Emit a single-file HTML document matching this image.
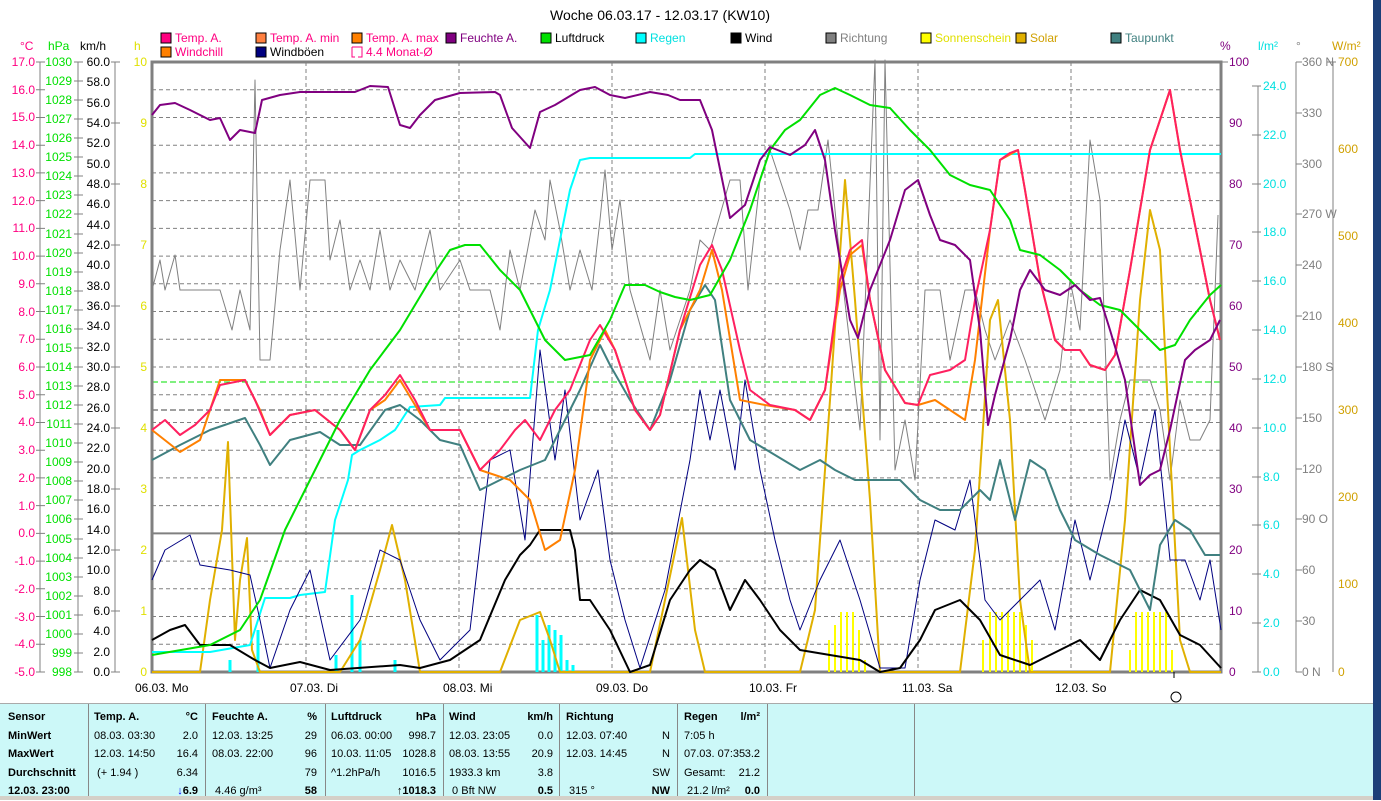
<!DOCTYPE html>
<html><head><meta charset="utf-8"><style>
body{margin:0;width:1381px;height:800px;overflow:hidden;background:#fff;font-family:"Liberation Sans",sans-serif}
svg{position:absolute;left:0;top:0}
text{font-family:"Liberation Sans",sans-serif;font-size:12px}
#tbl{position:absolute;left:0;top:703px;width:1373px;height:92px;background:#ccf8f8;border-top:1px solid #aaa}
.c{position:absolute;top:0;height:92px;border-left:1px solid #888}
.r{position:absolute;font-size:11px;line-height:18.6px;font-family:"Liberation Sans",sans-serif;white-space:nowrap}
.b{font-weight:bold}
</style></head><body>
<svg width="1381" height="800" viewBox="0 0 1381 800">
<text x="660" y="20" text-anchor="middle" style="font-size:14px">Woche 06.03.17 - 12.03.17 (KW10)</text>
<g style="font-size:12px">
<rect x="161" y="33" width="10" height="10" fill="#ff0080" stroke="#000"/><text x="175" y="42" fill="#ff0080">Temp. A.</text>
<rect x="256" y="33" width="10" height="10" fill="#ff8040" stroke="#000"/><text x="270" y="42" fill="#ff0080">Temp. A. min</text>
<rect x="352" y="33" width="10" height="10" fill="#ff8000" stroke="#000"/><text x="366" y="42" fill="#ff0080">Temp. A. max</text>
<rect x="446" y="33" width="10" height="10" fill="#800080" stroke="#000"/><text x="460" y="42" fill="#800080">Feuchte A.</text>
<rect x="541" y="33" width="10" height="10" fill="#00e000" stroke="#000"/><text x="555" y="42" fill="#000">Luftdruck</text>
<rect x="636" y="33" width="10" height="10" fill="#00ffff" stroke="#000"/><text x="650" y="42" fill="#00e0e0">Regen</text>
<rect x="731" y="33" width="10" height="10" fill="#000" stroke="#000"/><text x="745" y="42" fill="#000">Wind</text>
<rect x="826" y="33" width="10" height="10" fill="#808080" stroke="#000"/><text x="840" y="42" fill="#808080">Richtung</text>
<rect x="921" y="33" width="10" height="10" fill="#ffff00" stroke="#000"/><text x="935" y="42" fill="#e0e000">Sonnenschein</text>
<rect x="1016" y="33" width="10" height="10" fill="#e0b000" stroke="#000"/><text x="1030" y="42" fill="#d0a000">Solar</text>
<rect x="1111" y="33" width="10" height="10" fill="#408080" stroke="#000"/><text x="1125" y="42" fill="#408080">Taupunkt</text>
<rect x="161" y="47" width="10" height="10" fill="#ff8000" stroke="#000"/><text x="175" y="56" fill="#ff0080">Windchill</text>
<rect x="256" y="47" width="10" height="10" fill="#000080" stroke="#000"/><text x="270" y="56" fill="#000">Windböen</text>
<path d="M352 47h10v10h-4" fill="none" stroke="#ff0080"/><path d="M352 47v10h3" fill="none" stroke="#ff0080"/><text x="366" y="56" fill="#ff0080">4.4 Monat-Ø</text>
</g>
<text x="20" y="50" fill="#ff0080">°C</text><text x="48" y="50" fill="#00e000">hPa</text><text x="80" y="50" fill="#000">km/h</text><text x="134" y="50" fill="#e0e000">h</text>
<text x="1220" y="50" fill="#800080">%</text><text x="1258" y="50" fill="#00e0e0">l/m²</text><text x="1296" y="50" fill="#808080">°</text><text x="1332" y="50" fill="#d0a000">W/m²</text>
<g stroke="#808080" stroke-dasharray="4,3" stroke-width="1">
<path d="M152 89.7H1221M152 117.5H1221M152 145.2H1221M152 172.9H1221M152 200.6H1221M152 228.4H1221M152 256.1H1221M152 283.8H1221M152 311.5H1221M152 339.3H1221M152 367H1221M152 394.7H1221M152 422.5H1221M152 450.2H1221M152 477.9H1221M152 505.6H1221M152 561.1H1221M152 588.8H1221M152 616.5H1221M152 644.3H1221"/>
<path d="M306 62V672M459 62V672M612 62V672M765 62V672M918 62V672M1071 62V672"/>
</g>
<path d="M152 382H1221" stroke="#00e000" stroke-dasharray="6,3"/>
<path d="M152 410H1221" stroke="#404040" stroke-dasharray="6,3"/>
<path d="M152 533.4H1221" stroke="#808080" stroke-width="2"/>
<rect x="152" y="62" width="1069" height="610" fill="none" stroke="#808080" stroke-width="3"/>
<g stroke="#808080"><path d="M40 62V672M78 62V672M115 62V672"/>
<path d="M36 62h9M36 89.7h9M36 117.5h9M36 145.2h9M36 172.9h9M36 200.6h9M36 228.4h9M36 256.1h9M36 283.8h9M36 311.5h9M36 339.3h9M36 367h9M36 394.7h9M36 422.5h9M36 450.2h9M36 477.9h9M36 505.6h9M36 533.4h9M36 561.1h9M36 588.8h9M36 616.5h9M36 644.3h9M36 672h9"/>
<path d="M74 62h9M74 81h9M74 100h9M74 119h9M74 138h9M74 157h9M74 176h9M74 195h9M74 214h9M74 234h9M74 253h9M74 272h9M74 291h9M74 310h9M74 329h9M74 348h9M74 367h9M74 386h9M74 405h9M74 424h9M74 443h9M74 462h9M74 481h9M74 500h9M74 519h9M74 539h9M74 558h9M74 577h9M74 596h9M74 615h9M74 634h9M74 653h9M74 672h9"/>
<path d="M111 62h9M111 123h9M111 184h9M111 245h9M111 306h9M111 367h9M111 428h9M111 489h9M111 550h9M111 611h9M111 672h9"/>
<path d="M1221 62h7M1258 86V672M1252 86h9M1252 135h9M1252 184h9M1252 232h9M1252 281h9M1252 330h9M1252 379h9M1252 428h9M1252 477h9M1252 525h9M1252 574h9M1252 623h9M1252 672h9"/>
<path d="M1296 62V672M1296 62h6M1296 113h6M1296 164h6M1296 214h6M1296 265h6M1296 316h6M1296 367h6M1296 418h6M1296 469h6M1296 519h6M1296 570h6M1296 621h6M1296 672h6"/>
<path d="M1333 62V672M1327 62h9"/></g>
<g fill="#ff0080" text-anchor="end">
<text x="35" y="66">17.0</text><text x="35" y="94">16.0</text><text x="35" y="121">15.0</text><text x="35" y="149">14.0</text><text x="35" y="177">13.0</text><text x="35" y="205">12.0</text><text x="35" y="232">11.0</text><text x="35" y="260">10.0</text><text x="35" y="288">9.0</text><text x="35" y="316">8.0</text><text x="35" y="343">7.0</text><text x="35" y="371">6.0</text><text x="35" y="399">5.0</text><text x="35" y="426">4.0</text><text x="35" y="454">3.0</text><text x="35" y="482">2.0</text><text x="35" y="510">1.0</text><text x="35" y="537">0.0</text><text x="35" y="565">-1.0</text><text x="35" y="593">-2.0</text><text x="35" y="621">-3.0</text><text x="35" y="648">-4.0</text><text x="35" y="676">-5.0</text></g>
<g fill="#00e000" text-anchor="end">
<text x="72" y="66">1030</text><text x="72" y="85">1029</text><text x="72" y="104">1028</text><text x="72" y="123">1027</text><text x="72" y="142">1026</text><text x="72" y="161">1025</text><text x="72" y="180">1024</text><text x="72" y="199">1023</text><text x="72" y="218">1022</text><text x="72" y="238">1021</text><text x="72" y="257">1020</text><text x="72" y="276">1019</text><text x="72" y="295">1018</text><text x="72" y="314">1017</text><text x="72" y="333">1016</text><text x="72" y="352">1015</text><text x="72" y="371">1014</text><text x="72" y="390">1013</text><text x="72" y="409">1012</text><text x="72" y="428">1011</text><text x="72" y="447">1010</text><text x="72" y="466">1009</text><text x="72" y="485">1008</text><text x="72" y="504">1007</text><text x="72" y="523">1006</text><text x="72" y="543">1005</text><text x="72" y="562">1004</text><text x="72" y="581">1003</text><text x="72" y="600">1002</text><text x="72" y="619">1001</text><text x="72" y="638">1000</text><text x="72" y="657">999</text><text x="72" y="676">998</text></g>
<g fill="#000" text-anchor="end">
<text x="110" y="66">60.0</text><text x="110" y="86">58.0</text><text x="110" y="107">56.0</text><text x="110" y="127">54.0</text><text x="110" y="147">52.0</text><text x="110" y="168">50.0</text><text x="110" y="188">48.0</text><text x="110" y="208">46.0</text><text x="110" y="229">44.0</text><text x="110" y="249">42.0</text><text x="110" y="269">40.0</text><text x="110" y="290">38.0</text><text x="110" y="310">36.0</text><text x="110" y="330">34.0</text><text x="110" y="351">32.0</text><text x="110" y="371">30.0</text><text x="110" y="391">28.0</text><text x="110" y="412">26.0</text><text x="110" y="432">24.0</text><text x="110" y="452">22.0</text><text x="110" y="473">20.0</text><text x="110" y="493">18.0</text><text x="110" y="513">16.0</text><text x="110" y="534">14.0</text><text x="110" y="554">12.0</text><text x="110" y="574">10.0</text><text x="110" y="595">8.0</text><text x="110" y="615">6.0</text><text x="110" y="635">4.0</text><text x="110" y="656">2.0</text><text x="110" y="676">0.0</text></g>
<g fill="#e0e000" text-anchor="end" style="font-size:11px">
<text x="147" y="66">10</text><text x="147" y="127">9</text><text x="147" y="188">8</text><text x="147" y="249">7</text><text x="147" y="310">6</text><text x="147" y="371">5</text><text x="147" y="432">4</text><text x="147" y="493">3</text><text x="147" y="554">2</text><text x="147" y="615">1</text><text x="147" y="676">0</text></g>
<g fill="#800080">
<text x="1229" y="66">100</text><text x="1229" y="127">90</text><text x="1229" y="188">80</text><text x="1229" y="249">70</text><text x="1229" y="310">60</text><text x="1229" y="371">50</text><text x="1229" y="432">40</text><text x="1229" y="493">30</text><text x="1229" y="554">20</text><text x="1229" y="615">10</text><text x="1229" y="676">0</text></g>
<g fill="#00e0e0">
<text x="1263" y="90">24.0</text><text x="1263" y="139">22.0</text><text x="1263" y="188">20.0</text><text x="1263" y="236">18.0</text><text x="1263" y="285">16.0</text><text x="1263" y="334">14.0</text><text x="1263" y="383">12.0</text><text x="1263" y="432">10.0</text><text x="1263" y="481">8.0</text><text x="1263" y="529">6.0</text><text x="1263" y="578">4.0</text><text x="1263" y="627">2.0</text><text x="1263" y="676">0.0</text></g>
<g fill="#808080">
<text x="1302" y="66">360 N</text><text x="1302" y="117">330</text><text x="1302" y="168">300</text><text x="1302" y="218">270 W</text><text x="1302" y="269">240</text><text x="1302" y="320">210</text><text x="1302" y="371">180 S</text><text x="1302" y="422">150</text><text x="1302" y="473">120</text><text x="1302" y="523">90 O</text><text x="1302" y="574">60</text><text x="1302" y="625">30</text><text x="1302" y="676">0 N</text></g>
<g fill="#d0a000">
<text x="1338" y="66">700</text><text x="1338" y="153">600</text><text x="1338" y="240">500</text><text x="1338" y="327">400</text><text x="1338" y="414">300</text><text x="1338" y="501">200</text><text x="1338" y="588">100</text><text x="1338" y="676">0</text></g>
<g stroke="#ffff00" stroke-width="2">
<path d="M829 672V640M835 672V625M841 672V612M847 672V612M853 672V612M859 672V630M865 672V660M983 672V640M990 672V612M996 672V612M1002 672V612M1008 672V612M1014 672V612M1020 672V612M1026 672V625M1032 672V640M1130 672V650M1136 672V612M1142 672V612M1148 672V612M1154 672V612M1160 672V612M1166 672V612M1172 672V650M543 672V660M549 672V650M555 672V640M561 672V650M567 672V660"/>
</g>
<g stroke="#00ffff" stroke-width="3">
<path d="M230 672V660M258 672V630M336 672V655M352 672V595M360 672V640M395 672V660M537 672V615M543 672V640M549 672V625M555 672V630M561 672V635M567 672V660M573 672V665"/>
</g>
<g fill="none" stroke-linejoin="round">
<polyline stroke="#808080" stroke-width="1" points="152,290 160,260 165,290 175,255 180,290 220,290 232,330 240,290 250,330 255,80 260,360 270,360 280,250 290,180 300,290 310,180 325,180 330,260 340,220 350,290 360,260 370,290 380,230 390,290 400,260 415,290 430,230 440,290 460,260 470,290 490,290 500,330 510,250 520,290 535,210 545,240 550,180 560,230 570,290 580,250 592,290 600,220 605,170 612,250 620,200 630,290 650,360 660,290 670,350 690,290 700,240 710,250 730,180 740,180 748,290 760,180 770,150 780,180 790,210 800,250 808,210 818,210 828,140 840,260 860,430 875,60 880,440 885,60 895,470 905,420 915,480 925,290 940,290 950,360 965,290 975,290 985,330 995,360 1010,320 1025,360 1045,420 1060,370 1070,280 1080,330 1090,140 1100,200 1110,480 1120,420 1130,380 1150,380 1160,410 1170,480 1180,400 1190,440 1200,440 1210,420 1218,215"/>
<polyline stroke="#e0b000" stroke-width="2" points="152,672 200,672 210,600 222,530 228,442 235,640 240,580 247,538 252,650 260,672 340,672 360,640 380,570 392,525 405,580 420,672 500,672 520,620 540,612 550,640 560,672 650,672 665,600 682,518 695,630 705,672 800,672 815,610 830,400 845,180 855,300 870,500 880,672 960,672 975,550 990,320 998,300 1010,420 1020,600 1030,672 1110,672 1125,520 1140,300 1150,210 1160,250 1170,450 1180,640 1190,672 1221,672"/>
<polyline stroke="#00ffff" stroke-width="2" points="152,652 210,652 250,645 265,598 290,598 300,595 325,592 335,520 348,480 352,455 360,450 380,440 395,430 410,407 440,405 445,398 530,398 538,330 550,290 570,190 580,160 590,158 690,158 695,154 1221,154"/>
<polyline stroke="#000080" stroke-width="1" points="152,580 165,550 190,535 200,565 230,570 250,575 260,620 270,668 290,610 310,570 330,660 360,620 380,550 400,560 420,620 440,660 470,630 490,460 510,450 525,540 540,350 555,460 565,390 580,520 598,470 610,560 625,620 640,668 665,590 690,460 700,390 710,440 720,390 735,470 745,380 760,470 775,540 790,600 800,630 820,580 840,540 860,600 880,668 905,668 920,580 935,520 955,530 970,480 985,600 1000,620 1020,600 1040,580 1055,630 1075,520 1090,580 1110,500 1125,420 1140,480 1155,410 1170,560 1185,560 1200,600 1210,560 1221,630"/>
<polyline stroke="#000" stroke-width="2" points="152,640 170,630 185,625 200,645 230,645 255,660 270,668 300,662 330,670 400,665 420,668 450,660 480,640 505,580 520,555 530,545 540,530 550,530 560,530 570,530 575,550 580,600 590,600 610,630 630,672 650,665 670,600 690,570 700,560 715,570 730,610 745,580 760,600 780,630 800,650 830,655 860,660 880,672 900,668 920,640 935,610 960,600 980,620 1000,655 1030,665 1060,650 1080,640 1100,660 1120,620 1140,590 1160,600 1180,635 1200,645 1221,668"/>
<polyline stroke="#408080" stroke-width="2" points="152,460 180,445 210,430 245,418 260,445 270,465 290,440 320,432 340,445 360,445 385,410 400,405 420,420 440,440 460,445 480,490 500,480 520,470 545,460 565,420 580,390 600,345 610,365 630,400 650,430 670,380 690,310 705,285 715,300 730,400 750,440 775,455 800,470 820,460 835,470 855,480 880,480 900,480 920,500 940,510 960,510 980,490 990,500 1000,460 1015,520 1030,460 1045,470 1060,510 1075,540 1100,555 1130,570 1150,610 1160,545 1175,520 1190,530 1205,555 1220,555"/>
<polyline stroke="#ff8000" stroke-width="2" points="152,430 180,452 200,440 220,380 245,380 260,410 270,435 290,415 315,410 340,430 355,450 370,410 385,400 400,380 415,405 430,430 460,430 480,470 510,480 530,500 545,550 560,540 575,470 590,360 605,330 615,350 635,410 650,430 660,415 680,330 700,290 712,250 722,290 740,400 765,405 795,410 810,420 825,390 840,290 850,255 862,245 870,300 885,370 905,403 918,405 935,400 950,410 965,420 975,360 990,230 1000,160 1018,150 1025,190 1040,280 1055,340 1065,350 1080,350 1090,365 1105,370 1115,355 1130,270 1150,150 1170,90 1180,150 1200,250 1210,300 1220,340"/>
<polyline stroke="#ff2060" stroke-width="2" points="152,430 165,420 180,435 195,425 210,410 220,385 245,380 255,400 270,435 290,415 315,410 340,430 355,450 370,410 385,395 400,375 415,400 430,430 460,430 480,470 500,450 515,430 525,420 540,440 555,410 570,390 590,340 600,325 615,350 635,410 650,430 660,415 680,330 700,265 712,245 722,270 740,350 750,390 770,405 795,410 810,420 825,390 840,280 850,250 862,240 870,300 885,370 905,403 918,405 930,375 950,370 965,360 975,300 990,230 1000,160 1010,153 1018,150 1025,190 1040,280 1055,340 1065,350 1080,350 1090,365 1105,370 1115,355 1130,270 1150,150 1170,90 1180,150 1200,250 1210,300 1220,340"/>
<polyline stroke="#00e000" stroke-width="2" points="152,655 210,645 240,630 260,600 285,530 310,480 340,420 370,370 400,330 430,280 450,250 465,245 480,245 500,270 520,290 545,340 565,360 590,355 610,320 625,285 645,285 660,292 675,297 690,300 710,295 730,260 750,210 770,150 785,130 800,120 820,95 835,88 850,95 870,105 890,108 910,130 930,150 950,175 970,185 990,190 1010,220 1020,250 1040,255 1060,270 1080,290 1100,305 1120,310 1140,330 1160,350 1175,345 1190,320 1210,295 1221,285"/>
<polyline stroke="#800080" stroke-width="2" points="152,115 160,105 175,103 190,110 210,120 220,118 230,140 240,130 255,133 262,100 280,95 300,92 355,92 370,86 388,87 400,125 410,128 420,115 435,100 460,93 495,92 500,95 512,128 530,148 540,112 555,105 580,90 595,87 610,95 625,98 650,92 668,95 680,100 700,100 712,130 730,218 745,205 760,160 770,147 790,155 805,145 815,130 825,160 835,230 850,320 858,338 870,290 890,240 905,190 918,180 930,215 940,240 955,245 970,260 980,330 988,425 995,395 1010,340 1020,290 1030,270 1045,290 1060,295 1075,285 1090,300 1100,298 1110,330 1125,380 1140,485 1150,475 1160,470 1170,430 1185,360 1195,350 1210,340 1220,320"/>
</g>
<path d="M1174 672v6" stroke="#000"/>
<g style="font-size:11px"><text x="135" y="692">06.03.  Mo</text><text x="290" y="692">07.03.  Di</text><text x="443" y="692">08.03.  Mi</text><text x="596" y="692">09.03.  Do</text><text x="749" y="692">10.03.  Fr</text><text x="902" y="692">11.03.  Sa</text><text x="1055" y="692">12.03.  So</text></g>
<circle cx="1176" cy="697" r="5" fill="none" stroke="#000"/>
<rect x="1373" y="0" width="8" height="800" fill="#1c3f78"/>
<rect x="0" y="795" width="1373" height="5" fill="#d4d0c8"/>
</svg>
<div id="tbl">
<div class="c" style="left:88px"></div><div class="c" style="left:205px"></div><div class="c" style="left:325px"></div><div class="c" style="left:443px"></div><div class="c" style="left:559px"></div><div class="c" style="left:677px"></div><div class="c" style="left:767px"></div><div class="c" style="left:914px"></div>
<div class="r b" style="left:8px;top:4px">Sensor<br>MinWert<br>MaxWert<br>Durchschnitt<br>12.03. 23:00</div>
<div class="r" style="left:94px;top:4px"><b>Temp. A.</b><br>08.03.  03:30<br>12.03.  14:50<br>&nbsp;(+ 1.94 )</div>
<div class="r" style="right:1175px;top:4px;text-align:right"><b>°C</b><br>2.0<br>16.4<br>6.34<br><b><span style="color:#00f">↓</span>6.9</b></div>
<div class="r" style="left:212px;top:4px"><b>Feuchte A.</b><br>12.03.  13:25<br>08.03.  22:00<br><br>&nbsp;4.46 g/m³</div>
<div class="r" style="right:1056px;top:4px;text-align:right"><b>%</b><br>29<br>96<br>79<br><b>58</b></div>
<div class="r" style="left:331px;top:4px"><b>Luftdruck</b><br>06.03.  00:00<br>10.03.  11:05<br>^1.2hPa/h</div>
<div class="r" style="right:937px;top:4px;text-align:right"><b>hPa</b><br>998.7<br>1028.8<br>1016.5<br><b>↑1018.3</b></div>
<div class="r" style="left:449px;top:4px"><b>Wind</b><br>12.03.  23:05<br>08.03.  13:55<br>1933.3 km<br>&nbsp;0 Bft NW</div>
<div class="r" style="right:820px;top:4px;text-align:right"><b>km/h</b><br>0.0<br>20.9<br>3.8<br><b>0.5</b></div>
<div class="r" style="left:566px;top:4px"><b>Richtung</b><br>12.03.  07:40<br>12.03.  14:45<br><br>&nbsp;315 °</div>
<div class="r" style="right:703px;top:4px;text-align:right"><b>&nbsp;</b><br>N<br>N<br>SW<br><b>NW</b></div>
<div class="r" style="left:684px;top:4px"><b>Regen</b><br>7:05 h<br>07.03. 07:35<br>Gesamt:<br>&nbsp;21.2 l/m²</div>
<div class="r" style="right:613px;top:4px;text-align:right"><b>l/m²</b><br>&nbsp;<br>3.2<br>21.2<br><b>0.0</b></div>
</div>
</body></html>
